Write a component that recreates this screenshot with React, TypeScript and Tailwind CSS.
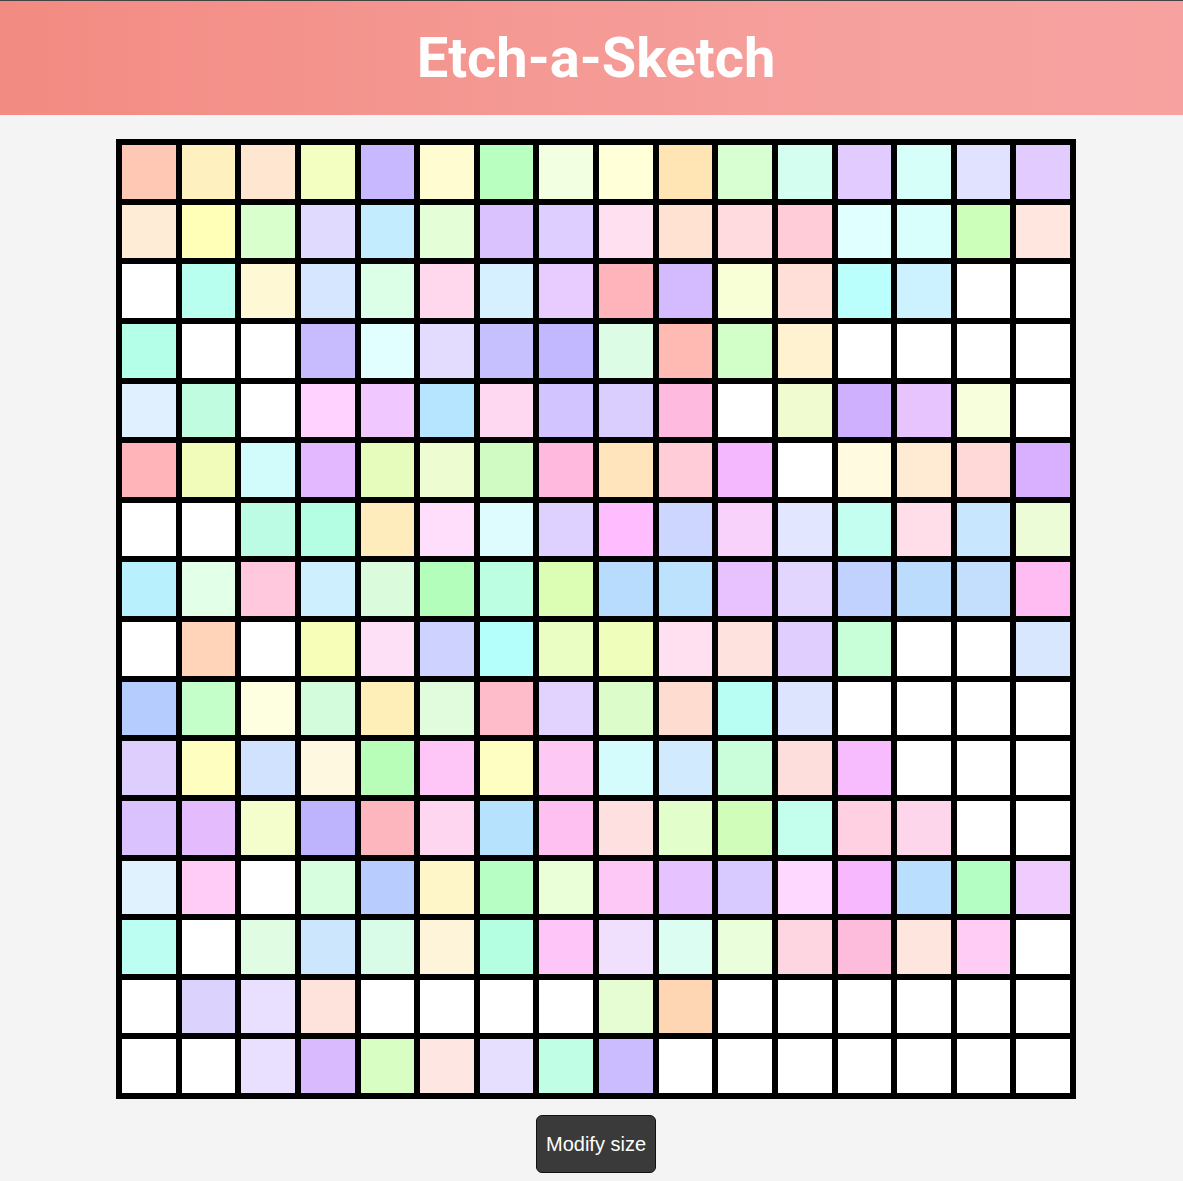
import { useState } from 'react'

// each row of the board, left to right (colours the user already etched in)
const ROWS = [
  'bg-[#ffc8b4] bg-[#fff0c0] bg-[#ffe6d0] bg-[#f2ffc0] bg-[#c8b8ff] bg-[#fffcd2] bg-[#b8ffc0] bg-[#f2ffe0] bg-[#ffffd8] bg-[#ffe4b4] bg-[#d8ffd2] bg-[#d4fff0] bg-[#e2ccff] bg-[#d6fffa] bg-[#e0e2ff] bg-[#e2ccff]',
  'bg-[#ffecd6] bg-[#ffffb8] bg-[#d8ffcc] bg-[#e0daff] bg-[#c4ecff] bg-[#e4ffd8] bg-[#dac2ff] bg-[#deceff] bg-[#ffe0f0] bg-[#ffe2d2] bg-[#ffdade] bg-[#ffccd8] bg-[#e0ffff] bg-[#d8fffc] bg-[#ccffba] bg-[#ffe6de]',
  'bg-white bg-[#b8fff0] bg-[#fff8d4] bg-[#d6e6ff] bg-[#dcffe8] bg-[#ffd8ee] bg-[#d6f0ff] bg-[#e8ccff] bg-[#ffb4bc] bg-[#d4baff] bg-[#f8ffd6] bg-[#ffdfd8] bg-[#bafffc] bg-[#ccf2ff] bg-white bg-white',
  'bg-[#b4ffe8] bg-white bg-white bg-[#c8bcff] bg-[#e0fffe] bg-[#e4dcff] bg-[#c6c0ff] bg-[#c2b8ff] bg-[#dcfce6] bg-[#ffbab4] bg-[#d2ffc8] bg-[#fff2d0] bg-white bg-white bg-white bg-white',
  'bg-[#e0f0ff] bg-[#c0fce0] bg-white bg-[#ffd2ff] bg-[#f0c8ff] bg-[#b6e6ff] bg-[#fdd8f0] bg-[#d2c4ff] bg-[#daceff] bg-[#ffbae0] bg-white bg-[#f0fcd0] bg-[#ceb0ff] bg-[#e8c4ff] bg-[#f6fedc] bg-white',
  'bg-[#ffb4ba] bg-[#f2fcba] bg-[#d2fcfc] bg-[#e4b8ff] bg-[#e6fcbc] bg-[#eefcd2] bg-[#d0fcc4] bg-[#ffb8de] bg-[#ffe4bc] bg-[#ffccd8] bg-[#f4b8ff] bg-white bg-[#fffae0] bg-[#ffead4] bg-[#ffd8d8] bg-[#d8b0ff]',
  'bg-white bg-white bg-[#bcfce4] bg-[#b4fee4] bg-[#ffecbc] bg-[#fedefa] bg-[#defcfe] bg-[#ded0ff] bg-[#ffbcfe] bg-[#ccd6ff] bg-[#f8d2fa] bg-[#e2e6ff] bg-[#c4fef0] bg-[#ffdeea] bg-[#c8e6fe] bg-[#ecfcd6]',
  'bg-[#b8f0fe] bg-[#e2ffe8] bg-[#ffc8dc] bg-[#cef0fe] bg-[#dafcdc] bg-[#b4febc] bg-[#bcfee2] bg-[#dcfeb4] bg-[#b8dcfe] bg-[#bce2fe] bg-[#e8c2fe] bg-[#e2d6fe] bg-[#c2d2fe] bg-[#bcdcfe] bg-[#c4defe] bg-[#febcf2]',
  'bg-white bg-[#ffd4b8] bg-white bg-[#f6feb8] bg-[#fee0f6] bg-[#ced2fe] bg-[#b4fefc] bg-[#eafec4] bg-[#f0febc] bg-[#fee0f0] bg-[#fee2de] bg-[#e0cefe] bg-[#c8fed8] bg-white bg-white bg-[#d8e6fe]',
  'bg-[#b4ccfe] bg-[#c4fec8] bg-[#fefee0] bg-[#d2fcdc] bg-[#feeeb8] bg-[#e0fcdc] bg-[#febcca] bg-[#e2d2fe] bg-[#dcfcca] bg-[#fedcd0] bg-[#b8fef2] bg-[#dce4fe] bg-white bg-white bg-white bg-white',
  'bg-[#decefe] bg-[#fefec0] bg-[#d0e2fe] bg-[#fef8e0] bg-[#b8feb8] bg-[#fec6f6] bg-[#fefec2] bg-[#fec8f4] bg-[#d4fcfc] bg-[#d2eafe] bg-[#cafeda] bg-[#fededc] bg-[#f6bcfe] bg-white bg-white bg-white',
  'bg-[#dac2fe] bg-[#e4bcfe] bg-[#f4fecc] bg-[#beb4fe] bg-[#feb6be] bg-[#fed6f0] bg-[#b6e2fe] bg-[#fec0f0] bg-[#fee0e0] bg-[#e2feca] bg-[#d0feba] bg-[#c4feec] bg-[#fed0e2] bg-[#fed6ec] bg-white bg-white',
  'bg-[#e0f2fe] bg-[#feccf6] bg-white bg-[#d8fee0] bg-[#b8ccfe] bg-[#fef6c8] bg-[#b6fec4] bg-[#eafed8] bg-[#fec8f6] bg-[#e6c2fe] bg-[#d8cafe] bg-[#fed8fe] bg-[#f8b8fe] bg-[#badefe] bg-[#b4fec4] bg-[#f0ccfe]',
  'bg-[#bcfef2] bg-white bg-[#e0fce2] bg-[#cce6fe] bg-[#d8fce8] bg-[#fef4da] bg-[#b4fee2] bg-[#fec6f8] bg-[#f0e0fe] bg-[#dcfef2] bg-[#eafedc] bg-[#fed6e2] bg-[#febcdc] bg-[#fee6de] bg-[#feccf4] bg-white',
  'bg-white bg-[#dcd2fe] bg-[#e8e0fe] bg-[#fee2dc] bg-white bg-white bg-white bg-white bg-[#e6fcd2] bg-[#fed6b4] bg-white bg-white bg-white bg-white bg-white bg-white',
  'bg-white bg-white bg-[#e8e0fe] bg-[#dabafe] bg-[#d8fec4] bg-[#fee6e2] bg-[#e6e0fe] bg-[#c0fee6] bg-[#cabcfe] bg-white bg-white bg-white bg-white bg-white bg-white bg-white',
]

function Board() {
  const cells = ROWS.flatMap((row) => row.split(' '))

  return (
    <div className="grid grid-cols-16 grid-rows-16 gap-[6px] p-[6px] w-[960px] h-[960px] bg-black">
      {cells.map((bg, i) => (
        <div key={i} className={bg} />
      ))}
    </div>
  )
}

export default function App() {
  const [size] = useState(16)

  return (
    <div className="min-h-[1181px] bg-[#f4f4f4] border-t border-[#444444] font-['Liberation_Sans',Arial,sans-serif]">
      <header className="h-[114px] flex items-center justify-center pl-[9px] bg-gradient-to-r from-[#f28b82] via-[#f6a09d] via-70% to-[#f7a2a0]">
        <h1 className="-mt-[1px] text-[56px] leading-none font-bold text-white font-['Roboto',sans-serif]">
          Etch-a-Sketch
        </h1>
      </header>

      <main className="flex flex-col items-center pl-[9px] pt-6 gap-4" data-size={size}>
        <Board />
        <button className="h-[58px] px-[9px] rounded-md bg-[#3a3a3a] border border-[#111111] text-white text-[20px] leading-none">
          Modify size
        </button>
      </main>
    </div>
  )
}
